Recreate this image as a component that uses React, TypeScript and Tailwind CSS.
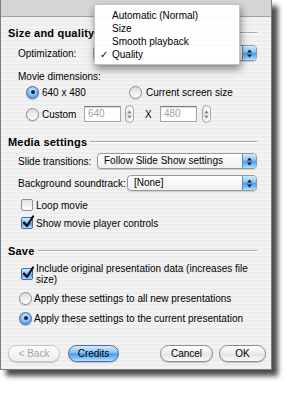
// Export sheet with open Optimization menu
import React from 'react';

const aquaBlue =
  'bg-[linear-gradient(#d3ebfe_0%,#86c3f5_45%,#4b9ae6_52%,#7cc1f8_80%,#b9e2ff_100%)]';

function Radio({ on = false }: { on?: boolean }) {
  if (on) {
    return (
      <span className="w-[13px] h-[13px] shrink-0 rounded-full border border-[#3f6ea8] bg-[radial-gradient(circle_at_50%_35%,#e4f4ff_0%,#8fcaf6_40%,#3b86dc_100%)] flex items-center justify-center shadow-[0_1px_1px_rgba(0,0,0,0.25)]">
        <span className="w-[4px] h-[4px] rounded-full bg-[#14213a]" />
      </span>
    );
  }
  return (
    <span className="w-[13px] h-[13px] shrink-0 rounded-full border border-[#8e8e8e] bg-[linear-gradient(#dcdcdc,#ffffff)] shadow-[0_1px_1px_rgba(0,0,0,0.15)]" />
  );
}

function Checkbox({ on = false }: { on?: boolean }) {
  if (on) {
    return (
      <span className={`relative w-[12px] h-[12px] shrink-0 rounded-[2px] border border-[#3f6ea8] ${aquaBlue}`}>
        <svg width="14" height="14" viewBox="0 0 14 14" className="absolute left-[-1px] top-[-3px]">
          <path d="M3 7.5 L6 11 L12 1.5" fill="none" stroke="#111" strokeWidth="2.2" strokeLinecap="round" strokeLinejoin="round" />
        </svg>
      </span>
    );
  }
  return (
    <span className="w-[12px] h-[12px] shrink-0 rounded-[2px] border border-[#8e8e8e] bg-[linear-gradient(#e2e2e2,#ffffff)]" />
  );
}

function Arrows({ color = '#1b1b1b' }: { color?: string }) {
  return (
    <svg width="7" height="11" viewBox="0 0 7 11">
      <polygon points="1,4.5 3.5,1.5 6,4.5" fill={color} />
      <polygon points="1,6.5 3.5,9.5 6,6.5" fill={color} />
    </svg>
  );
}

function Popup({ text, width }: { text: string; width: string }) {
  return (
    <div className={`${width} h-[16px] flex rounded-[4px] border border-[#979797] bg-[linear-gradient(#ffffff,#efefef)] shadow-[0_1px_1px_rgba(0,0,0,0.15)] overflow-hidden`}>
      <span className="flex-1 pl-[6px] leading-[14px] truncate">{text}</span>
      <span className={`w-[14px] flex items-center justify-center border-l border-[#5f8fc8] ${aquaBlue}`}>
        <Arrows />
      </span>
    </div>
  );
}

function Stepper() {
  return (
    <span className="w-[9px] h-[18px] rounded-full border border-[#a3a3a3] bg-[linear-gradient(90deg,#e9e9e9,#ffffff)] flex items-center justify-center">
      <Arrows color="#8a8a8a" />
    </span>
  );
}

function Field({ value }: { value: string }) {
  return (
    <span className="w-[37px] h-[16px] bg-white border border-[#a6a6a6] border-t-[#7c7c7c] shadow-[inset_0_1px_1px_rgba(0,0,0,0.15)] pl-[3px] leading-[14px] text-[#a3a3a3]">
      {value}
    </span>
  );
}

function Heading({ title }: { title: string }) {
  return (
    <div className="h-[14px] flex items-center pl-[7px] pr-[14px]">
      <span className="text-[11px] font-bold tracking-[0.2px]">{title}</span>
      <span className="flex-1 ml-[3px] h-[2px] border-t border-[#a8a8a8] border-b border-b-white" />
    </div>
  );
}

function Button({ label, kind = 'normal', width }: { label: string; kind?: 'normal' | 'blue' | 'off'; width: string }) {
  const style =
    kind === 'blue'
      ? `border-[#4a6f9e] ${aquaBlue} text-black`
      : kind === 'off'
      ? 'border-[#c6c6c6] bg-[linear-gradient(#fbfbfb,#eeeeee)] text-[#a5a5a5]'
      : 'border-[#8b8b8b] bg-[linear-gradient(#ffffff_0%,#ececec_50%,#e2e2e2_51%,#fafafa_100%)] text-black';
  return (
    <span className={`${width} h-[17px] rounded-full border flex items-center justify-center shadow-[0_1px_1px_rgba(0,0,0,0.2)] ${style}`}>
      {label}
    </span>
  );
}

export default function App() {
  return (
    <div className="relative w-[294px] h-[400px] bg-white overflow-hidden text-[10px] text-black font-['Liberation_Sans',Arial,sans-serif]">
      {/* sheet window */}
      <div className="w-[272px] h-[370px] flex flex-col border-l border-r border-b border-[#7d7d7d] bg-[repeating-linear-gradient(#ededed_0px,#ededed_2px,#f3f3f3_2px,#f3f3f3_4px)] shadow-[6px_6px_5px_rgba(0,0,0,0.7)]">
        <div className="h-[17px] shrink-0 bg-[#d5d5d5] border-b border-[#a2a2a2]" />

        {/* Size and quality */}
        <div className="mt-[9px]">
          <Heading title="Size and quality" />
        </div>
        <div className="mt-[5px] h-[16px] flex items-center justify-between pl-[17px] pr-[14px]">
          <span>Optimization:</span>
          {/* label is hidden under the open menu */}
          <Popup text="" width="w-[164px]" />
        </div>
        <div className="mt-[8px] h-[14px] flex items-center pl-[17px]">Movie dimensions:</div>
        <div className="mt-[2px] h-[14px] flex items-center pl-[25px]">
          <div className="w-[103px] flex items-center gap-[3px]">
            <Radio on />
            <span>640 x 480</span>
          </div>
          <div className="flex items-center gap-[4px]">
            <Radio />
            <span>Current screen size</span>
          </div>
        </div>
        <div className="mt-[6px] h-[18px] flex items-center pl-[25px]">
          <Radio />
          <span className="ml-[3px] w-[42px]">Custom</span>
          <Field value="640" />
          <span className="ml-[4px]"><Stepper /></span>
          <span className="ml-[11px] w-[15px]">X</span>
          <Field value="480" />
          <span className="ml-[5px]"><Stepper /></span>
        </div>

        {/* Media settings */}
        <div className="mt-[12px]">
          <Heading title="Media settings" />
        </div>
        <div className="mt-[4px] h-[16px] flex items-center justify-between pl-[17px] pr-[14px]">
          <span>Slide transitions:</span>
          <Popup text="Follow Slide Show settings" width="w-[160px]" />
        </div>
        <div className="mt-[6px] h-[16px] flex items-center justify-between pl-[17px] pr-[14px]">
          <span>Background soundtrack:</span>
          <Popup text="[None]" width="w-[130px]" />
        </div>
        <div className="mt-[7px] h-[14px] flex items-center gap-[3px] pl-[20px]">
          <Checkbox />
          <span>Loop movie</span>
        </div>
        <div className="mt-[4px] h-[14px] flex items-center gap-[3px] pl-[20px]">
          <Checkbox on />
          <span>Show movie player controls</span>
        </div>

        {/* Save */}
        <div className="mt-[14px]">
          <Heading title="Save" />
        </div>
        <div className="mt-[5px] h-[22px] flex items-center gap-[3px] pl-[20px]">
          <Checkbox on />
          <span className="leading-[11px]">
            Include original presentation data (increases file
            <br />
            size)
          </span>
        </div>
        <div className="mt-[6px] h-[14px] flex items-center gap-[2px] pl-[18px]">
          <Radio />
          <span>Apply these settings to all new presentations</span>
        </div>
        <div className="mt-[6px] h-[14px] flex items-center gap-[2px] pl-[18px]">
          <Radio on />
          <span>Apply these settings to the current presentation</span>
        </div>

        <div className="mt-[20px] h-[17px] flex items-center pl-[7px] pr-[5px]">
          <Button label="< Back" kind="off" width="w-[52px]" />
          <span className="ml-[8px]"><Button label="Credits" kind="blue" width="w-[51px]" /></span>
          <span className="ml-auto"><Button label="Cancel" width="w-[53px]" /></span>
          <span className="ml-[6px]"><Button label="OK" width="w-[47px]" /></span>
        </div>
      </div>

      {/* open Optimization menu */}
      <div className="absolute left-[94px] top-[4px] w-[146px] pt-[4px] pb-[3px] bg-white/95 border border-[#c4c4c4] shadow-[1px_4px_8px_rgba(0,0,0,0.45)]">
        {['Automatic (Normal)', 'Size', 'Smooth playback', 'Quality'].map((item) => (
          <div key={item} className="h-[13px] flex items-center">
            <span className="w-[17px] pl-[5px] text-[10px]">{item === 'Quality' ? '✓' : ''}</span>
            <span>{item}</span>
          </div>
        ))}
      </div>
    </div>
  );
}
